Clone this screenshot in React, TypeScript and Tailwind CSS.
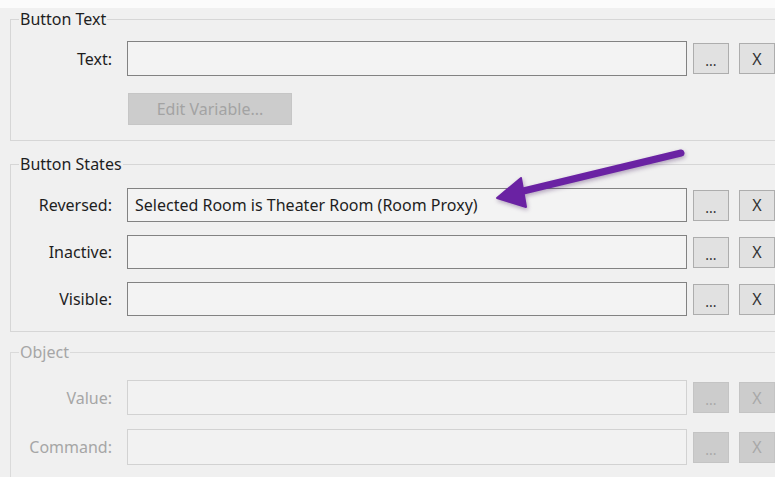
import React from "react";

type RowProps = {
  label: string;
  value?: string;
  disabled?: boolean;
  className?: string;
};

// One labelled expression field with its "..." and "X" buttons
const FieldRow = ({ label, value = "", disabled = false, className = "" }: RowProps) => {
  const labelColor = disabled ? "text-[#a6a6a6]" : "text-[#1e1e1e]";
  const boxBorder = disabled ? "border-[#d2d2d2] bg-[#f2f2f2]" : "border-[#828282] bg-[#f3f3f3]";
  const btn = disabled
    ? "bg-[#cccccc] border-[#c4c4c4] text-[#a8a8a8]"
    : "bg-[#e1e1e1] border-[#adadad] text-[#333]";

  return (
    <div className={`flex items-center ${className}`}>
      <div className={`w-[101px] text-right text-[16px] ${labelColor}`}>{label}:</div>
      <div
        className={`ml-[15px] w-[560px] h-full border flex items-center px-[7px] text-[16px] text-[#1e1e1e] ${boxBorder}`}
      >
        {value}
      </div>
      <button
        type="button"
        className={`ml-[6px] w-[36px] h-[31px] border flex items-end justify-center pb-[5px] text-[14px] leading-none ${btn}`}
      >
        ...
      </button>
      <button
        type="button"
        className={`ml-[10px] w-[36px] h-[31px] border flex items-center justify-center text-[16px] ${btn}`}
      >
        X
      </button>
    </div>
  );
};

const App = () => {
  return (
    <div
      className="relative w-[775px] h-[477px] overflow-hidden bg-[#f0f0f0]"
      style={{ fontFamily: "'Noto Sans', 'Open Sans', sans-serif" }}
    >
      <div className="h-[8px] bg-[#fbfbfb]" />

      {/* Button Text */}
      <fieldset className="ml-[10px] mt-px border-l border-t border-b border-[#d6d6d6] pb-[15px]">
        <legend className="ml-[8px] px-px text-[16px] leading-[20px] text-[#1e1e1e]">Button Text</legend>
        <FieldRow label="Text" className="mt-[12px] h-[35px]" />
        <button
          type="button"
          className="ml-[117px] mt-[17px] w-[164px] h-[32px] bg-[#cccccc] border border-[#c6c6c6] text-[16px] text-[#a3a3a3]"
        >
          Edit Variable...
        </button>
      </fieldset>

      {/* Button States */}
      <fieldset className="ml-[10px] mt-[13px] border-l border-t border-b border-[#d6d6d6] pb-[15px]">
        <legend className="ml-[8px] px-px text-[16px] leading-[20px] text-[#1e1e1e]">Button States</legend>
        <FieldRow
          label="Reversed"
          value="Selected Room is Theater Room (Room Proxy)"
          className="mt-[14px] h-[34px]"
        />
        <FieldRow label="Inactive" className="mt-[13px] h-[34px]" />
        <FieldRow label="Visible" className="mt-[13px] h-[34px]" />
      </fieldset>

      {/* Object (disabled) */}
      <fieldset className="ml-[10px] mt-[10px] border-l border-t border-[#dadada] pb-[15px]">
        <legend className="ml-[8px] px-px text-[16px] leading-[20px] text-[#a6a6a6]">Object</legend>
        <FieldRow label="Value" disabled className="mt-[18px] h-[35px]" />
        <FieldRow label="Command" disabled className="mt-[14px] h-[36px]" />
      </fieldset>

      {/* callout arrow */}
      <svg
        className="pointer-events-none absolute inset-0"
        width="775"
        height="477"
        viewBox="0 0 775 477"
        style={{ filter: "drop-shadow(1px 2px 2px rgba(60,20,90,0.35))" }}
      >
        <line x1="681" y1="153" x2="515" y2="193" stroke="#6a22a3" strokeWidth="7" strokeLinecap="round" />
        <polygon points="497,198 521,178 526,207" fill="#6a22a3" stroke="#6a22a3" strokeWidth="2" strokeLinejoin="round" />
      </svg>
    </div>
  );
};

export default App;
